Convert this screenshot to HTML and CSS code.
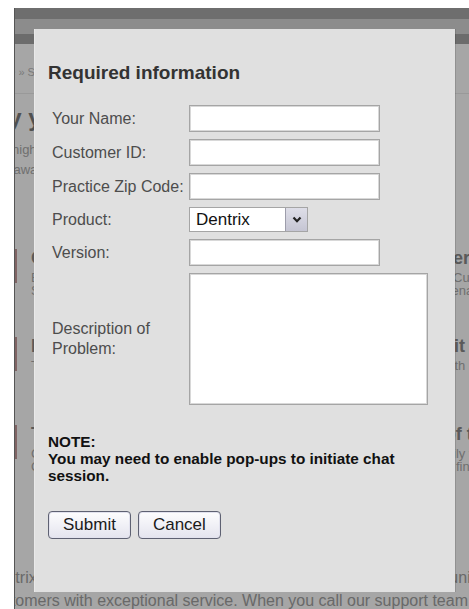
FILE: index.html
```html
<!DOCTYPE html>
<html lang="en">
<head>
<meta charset="utf-8">
<title>Dentrix Support</title>
<link rel="stylesheet" href="styles.css">
</head>
<body>
<div class="site">
  <header class="topbar"></header>
  <div class="subbar"></div>
  <nav class="navbar"></nav>

  <div class="page">
    <p class="crumbs">Home » Support</p>
    <h1>By your side, every day</h1>
    <p class="intro">The highest level of support for your practice<br>Just away from the phone, we are always ready</p>

    <section class="feature">
      <span class="icon"></span>
      <div class="feature-text">
        <h3>Online support resources and the Customer Center</h3>
        <p>Browse answers, tips and downloads whenever you need them, from the Customer service pages<br>Search the knowledge base, training videos and the latest program maintenance</p>
      </div>
    </section>
    <section class="feature">
      <span class="icon"></span>
      <div class="feature-text">
        <h3>Live chat with a support technician on call, no wait</h3>
        <p>Talk one-on-one with a technician who works with your practice each month</p>
      </div>
    </section>
    <section class="feature">
      <span class="icon"></span>
      <div class="feature-text">
        <h3>Telephone support for every practice, every day of the year</h3>
        <p>Call our team during business hours for help with setup, upgrades and daily workflow<br>Our technicians can connect to your computer to help you fix problems or find answers</p>
      </div>
    </section>

    <p class="closing">Dentrix has always been committed to providing our dental community with vital<br>customers with exceptional service. When you call our support team</p>
  </div>

  <div class="overlay"></div>

  <div class="modal" role="dialog" aria-labelledby="req-title">
    <h2 id="req-title">Required information</h2>
    <form class="form">
      <label for="f-name">Your Name:</label>
      <input id="f-name" class="field" type="text">

      <label for="f-cust">Customer ID:</label>
      <input id="f-cust" class="field" type="text">

      <label for="f-zip">Practice Zip Code:</label>
      <input id="f-zip" class="field" type="text">

      <label for="f-prod">Product:</label>
      <div class="select">
        <select id="f-prod">
          <option>Dentrix</option>
          <option>Dentrix Enterprise</option>
          <option>Dentrix G4</option>
        </select>
        <span class="arrow"><svg width="10" height="7" viewBox="0 0 10 7"><path d="M1.5 1.5 L5 5.2 L8.5 1.5" fill="none" stroke="#222" stroke-width="2.2"/></svg></span>
      </div>

      <label for="f-ver">Version:</label>
      <input id="f-ver" class="field" type="text">

      <label for="f-desc">Description of Problem:</label>
      <textarea id="f-desc" class="field area"></textarea>
    </form>

    <p class="note">NOTE:<br>You may need to enable pop-ups to initiate chat session.</p>

    <div class="actions">
      <button class="btn" type="button">Submit</button>
      <button class="btn" type="button">Cancel</button>
    </div>
  </div>
</div>
</body>
</html>
```

FILE: styles.css
```css
* {
  box-sizing: border-box;
}

html,
body {
  margin: 0;
  height: 100%;
}

body {
  background: #fff;
  font-family: "Liberation Sans", Arial, sans-serif;
  overflow: hidden;
}

/* Site frame behind the dialog */
.site {
  position: relative;
  margin: 8px 0 0 14px;
  height: 601px;
  border-left: 1px solid #555;
  background: #fff;
  overflow: hidden;
}

.topbar {
  height: 11px;
  background: #aaa;
}

.subbar {
  height: 15px;
  background: #d7d7d7;
}

.navbar {
  height: 10px;
  background: #a6a6a6;
}

.page {
  margin-left: -29px;
  width: 600px;
  color: #acacac;
  white-space: nowrap;
}

.crumbs {
  margin: 0;
  padding-top: 21px;
  height: 50px;
  font-size: 11px;
  line-height: 14px;
  color: #bbb;
  border-bottom: 1px solid #ececec;
}

.page h1 {
  margin: 10px 0 0;
  padding-left: 5px;
  font-size: 24px;
  line-height: 28px;
  color: #7b7b7b;
}

.intro {
  margin: 8px 0 0;
  font-size: 13px;
  line-height: 20px;
}

.feature {
  display: flex;
  gap: 14px;
  height: 88px;
}

.feature:first-of-type {
  margin-top: 67px;
}

.icon {
  flex: none;
  width: 31px;
  height: 34px;
  margin-top: 2px;
  border: 2px solid #c59a9a;
}

.feature-text h3 {
  margin: 0;
  font-size: 18px;
  line-height: 22px;
  color: #8a8a8a;
}

.feature-text p {
  margin: 2px 0 0;
  font-size: 13px;
  line-height: 13px;
}

.closing {
  margin: 55px 0 0;
  font-size: 16px;
  line-height: 23px;
  color: #a2a2a2;
}

.overlay {
  position: absolute;
  inset: 0;
  background: rgba(0, 0, 0, 0.35);
}

/* Dialog */
.modal {
  position: absolute;
  left: 19px;
  top: 21px;
  width: 421px;
  height: 563px;
  padding: 33px 14px 0;
  background: #e0e0e0;
  box-shadow: 1px 0 0 rgba(0, 0, 0, 0.12), inset 1px 0 0 #e9e9e9;
  color: #444;
}

.modal h2 {
  margin: 0;
  font-size: 19px;
  line-height: 22px;
  font-weight: bold;
  color: #333;
}

.form {
  display: grid;
  grid-template-columns: 137px auto;
  row-gap: 7px;
  align-items: center;
  justify-items: start;
  margin-top: 21px;
  padding-left: 4px;
}

.form label {
  font-size: 16px;
  line-height: 20px;
  color: #4d4d4d;
}

.field {
  width: 191px;
  height: 27px;
  margin: 0;
  padding: 0 5px;
  border: 1px solid #a5a5a5;
  box-shadow: inset 0 0 0 1px #d8d8d8;
  background: #fff;
  font: 17px "Liberation Sans", Arial, sans-serif;
  color: #111;
  outline: none;
}

.area {
  display: block;
  width: 239px;
  height: 132px;
  resize: none;
}

.select {
  display: flex;
  width: 119px;
  height: 25px;
  border: 1px solid #a5a5a5;
  background: #fff;
}

.select select {
  flex: 1;
  min-width: 0;
  appearance: none;
  -webkit-appearance: none;
  margin: 0;
  padding: 0 0 0 6px;
  border: 0;
  background: transparent;
  font: 17px "Liberation Sans", Arial, sans-serif;
  color: #111;
  outline: none;
}

.arrow {
  flex: none;
  width: 22px;
  display: grid;
  place-items: center;
  border-left: 1px solid #9d9dab;
  background: linear-gradient(#dedee8, #c5c5d3);
}

.note {
  margin: 28px 0 0;
  font-size: 15.3px;
  line-height: 17px;
  font-weight: bold;
  color: #111;
}

.actions {
  display: flex;
  gap: 7px;
  margin-top: 27px;
}

.btn {
  height: 28px;
  padding: 0 14px;
  border: 1px solid #5e6172;
  border-radius: 4px;
  background: linear-gradient(#fdfdfe, #e4e4ee);
  box-shadow: inset 0 0 0 1px #e2e2ee;
  font: 17px "Liberation Sans", Arial, sans-serif;
  color: #1a1a1a;
}
```
